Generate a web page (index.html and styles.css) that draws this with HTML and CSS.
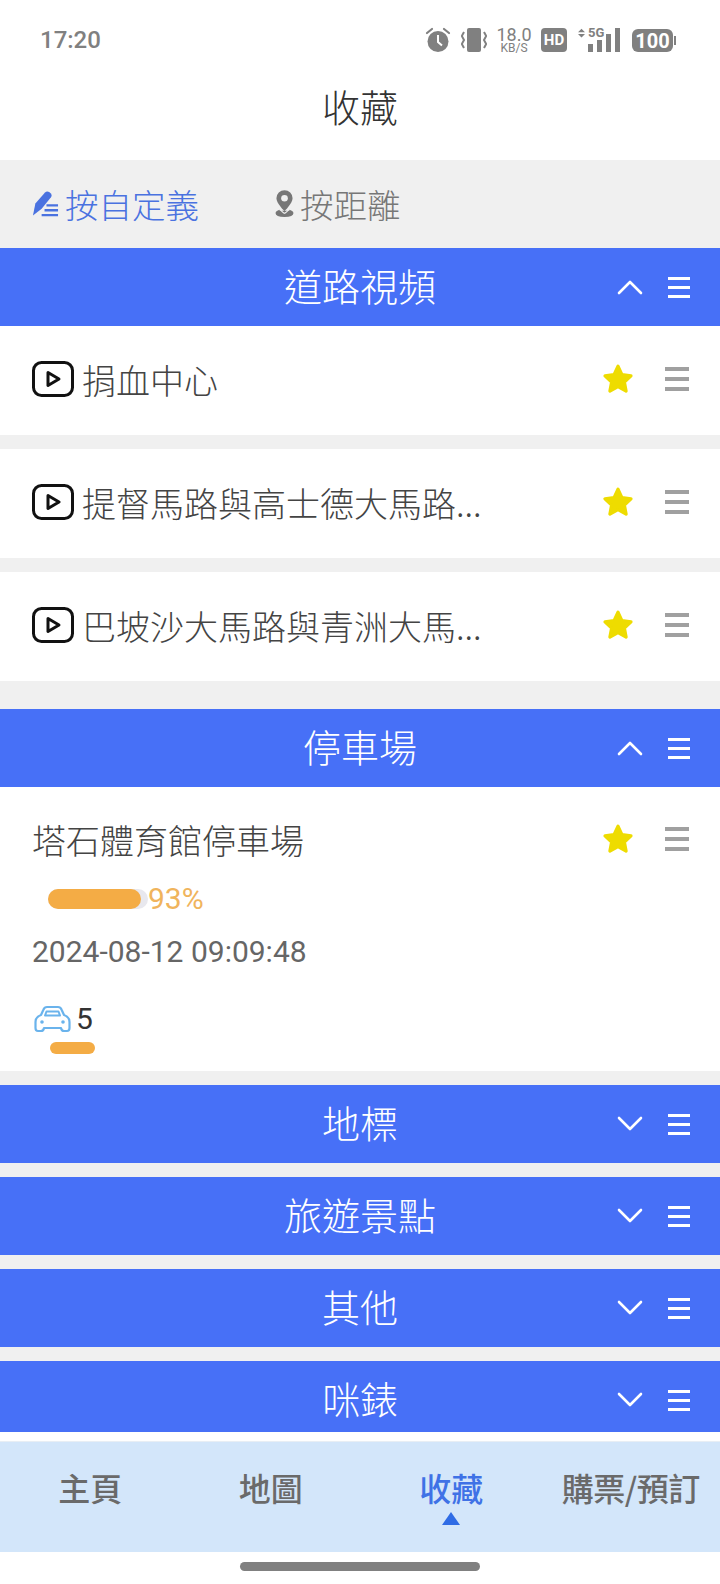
FILE: index.html
```html
<!DOCTYPE html>
<html lang="zh-Hant">
<head>
    <meta charset="UTF-8">
    <meta name="viewport" content="width=device-width, initial-scale=1.0">
    <title>收藏</title>
    <link rel="stylesheet" href="styles.css">
</head>
<body>
<svg class="sprites" width="0" height="0">
    <symbol id="chev-up" viewBox="0 0 26 16"><path d="M2 14 13 3l11 11" fill="none" stroke="#fff" stroke-width="2.6" stroke-linecap="round" stroke-linejoin="round"/></symbol>
    <symbol id="chev-down" viewBox="0 0 26 16"><path d="M2 2l11 11L24 2" fill="none" stroke="#fff" stroke-width="2.6" stroke-linecap="round" stroke-linejoin="round"/></symbol>
    <symbol id="star" viewBox="0 0 30 30"><path d="M15 3l3.700 7.900 8.500 1.100-6.200 5.900 1.600 8.400-7.600-4.200-7.600 4.200 1.600-8.400-6.200-5.900 8.500-1.100z" fill="#eedc00" stroke="#eedc00" stroke-width="3" stroke-linejoin="round"/></symbol>
    <symbol id="play" viewBox="0 0 42 36"><rect x="1.500" y="1.500" width="39" height="33" rx="8" fill="none" stroke="#111" stroke-width="3"/><path d="M16 11.500 27 18l-11 6.500z" fill="none" stroke="#111" stroke-width="3" stroke-linejoin="round"/></symbol>
</svg>

<div class="page">
    <!-- Status bar -->
    <div class="status">
        <span class="clock">17:20</span>
        <div class="status-icons">
            <svg class="ico-alarm" viewBox="0 0 26 26"><circle cx="13" cy="14.500" r="10.500" fill="#808080"/><path d="M13 8v7l4 3.500" fill="none" stroke="#fff" stroke-width="2"/><path d="M2 6l5-4M24 6l-5-4" stroke="#808080" stroke-width="2.200" stroke-linecap="round"/></svg>
            <svg class="ico-vib" viewBox="0 0 26 26"><rect x="6" y="1" width="14" height="24" rx="2" fill="#808080"/><path d="M3 4 .8 8 3 12 .8 16 3 20M23 4l2.200 4L23 12l2.200 4L23 20" transform="translate(0 1)" fill="none" stroke="#808080" stroke-width="2"/></svg>
            <div class="speed"><span class="speed-num">18.0</span><span class="speed-unit">KB/S</span></div>
            <span class="hd">HD</span>
            <div class="signal">
                <div class="net">
                    <svg class="ico-updown" viewBox="0 0 8 10"><path d="M4 0 8 4H0zM4 10 0 6h8z" fill="#808080"/></svg>
                    <span class="net-label">5G</span>
                </div>
                <div class="bars">
                    <i class="bar b1"></i><i class="bar b2"></i><i class="bar b3"></i><i class="bar b4"></i>
                </div>
            </div>
            <div class="battery"><span class="battery-num">100</span><i class="battery-tip"></i></div>
        </div>
    </div>

    <h1 class="title">收藏</h1>

    <div class="tabs">
        <div class="tab tab-active">
            <svg class="tab-ico" viewBox="0 0 28 28"><path d="M1 26.500 3.500 14 13.500 2.500c1.200-1.300 3-1.400 4.300-.4l1.500 1.200c1.300 1.100 1.400 2.900.4 4.200L10 19.500z" fill="#4a72e0"/><path d="M15 16h12M13 21h14M10 26h17" stroke="#4a72e0" stroke-width="2.400"/></svg>
            <span>按自定義</span>
        </div>
        <div class="tab">
            <svg class="tab-ico-pin" viewBox="0 0 20 30"><path d="M10 1a8.500 8.500 0 0 0-8.500 8.500C1.500 15 10 23 10 23s8.500-8 8.500-13.500A8.500 8.500 0 0 0 10 1z" fill="#777"/><circle cx="10" cy="9.500" r="3.500" fill="#f0f0f0"/><path d="M5 22.500c-2.500.7-3.500 1.600-3.500 2.800 0 2 3.800 3 8.500 3s8.500-1 8.500-3c0-1.200-1-2.100-3.500-2.800" fill="#777" stroke="#777" stroke-width="1.800"/><path d="M10 25.500c-1.500-1-3-2.300-4-3.500M10 25.500c1.500-1 3-2.300 4-3.500" fill="none" stroke="#f0f0f0" stroke-width="1.200"/></svg>
            <span>按距離</span>
        </div>
    </div>

    <div class="list">
        <section class="group">
            <div class="group-head">
                <span class="group-name">道路視頻</span>
                <svg class="chev"><use href="#chev-up"/></svg>
                <div class="burger burger-white"><i></i><i></i><i></i></div>
            </div>
            <div class="row">
                <svg class="play"><use href="#play"/></svg>
                <span class="row-name">捐血中心</span>
                <svg class="star"><use href="#star"/></svg>
                <div class="burger"><i></i><i></i><i></i></div>
            </div>
            <div class="row">
                <svg class="play"><use href="#play"/></svg>
                <span class="row-name">提督馬路與高士德大馬路...</span>
                <svg class="star"><use href="#star"/></svg>
                <div class="burger"><i></i><i></i><i></i></div>
            </div>
            <div class="row">
                <svg class="play"><use href="#play"/></svg>
                <span class="row-name">巴坡沙大馬路與青洲大馬...</span>
                <svg class="star"><use href="#star"/></svg>
                <div class="burger"><i></i><i></i><i></i></div>
            </div>
        </section>

        <section class="group group-parking">
            <div class="group-head">
                <span class="group-name">停車場</span>
                <svg class="chev"><use href="#chev-up"/></svg>
                <div class="burger burger-white"><i></i><i></i><i></i></div>
            </div>
            <div class="park">
                <div class="park-top">
                    <span class="row-name">塔石體育館停車場</span>
                    <svg class="star"><use href="#star"/></svg>
                    <div class="burger"><i></i><i></i><i></i></div>
                </div>
                <div class="usage">
                    <div class="meter"><div class="meter-fill" style="width: 93%"></div></div>
                    <span class="usage-pct">93%</span>
                </div>
                <div class="park-time">2024-08-12 09:09:48</div>
                <div class="car">
                    <svg class="car-ico" viewBox="0 0 37 28"><path d="M7 10 9.500 4.500Q10.500 2 13 2H24Q26.500 2 27.500 4.500L30 10Q35.500 12 35.500 17V23Q35.500 26 33 26H30Q27.500 26 27 23H10Q9.500 26 7 26H4Q1.500 26 1.500 23V17Q1.500 12 7 10Z" fill="none" stroke="#6ab3ec" stroke-width="2.200" stroke-linejoin="round"/><path d="M11 10.500 12.500 6.500H24.500L26 10.500Z" fill="none" stroke="#6ab3ec" stroke-width="2" stroke-linejoin="round"/><circle cx="8" cy="17" r="1.800" fill="#6ab3ec"/><circle cx="29" cy="17" r="1.800" fill="#6ab3ec"/></svg>
                    <span class="car-count">5</span>
                </div>
                <div class="car-meter"></div>
            </div>
        </section>

        <section class="group group-closed">
            <div class="group-head">
                <span class="group-name">地標</span>
                <svg class="chev"><use href="#chev-down"/></svg>
                <div class="burger burger-white"><i></i><i></i><i></i></div>
            </div>
        </section>
        <section class="group group-closed">
            <div class="group-head">
                <span class="group-name">旅遊景點</span>
                <svg class="chev"><use href="#chev-down"/></svg>
                <div class="burger burger-white"><i></i><i></i><i></i></div>
            </div>
        </section>
        <section class="group group-closed">
            <div class="group-head">
                <span class="group-name">其他</span>
                <svg class="chev"><use href="#chev-down"/></svg>
                <div class="burger burger-white"><i></i><i></i><i></i></div>
            </div>
        </section>
        <section class="group group-closed">
            <div class="group-head">
                <span class="group-name">咪錶</span>
                <svg class="chev"><use href="#chev-down"/></svg>
                <div class="burger burger-white"><i></i><i></i><i></i></div>
            </div>
        </section>
    </div>

    <!-- Bottom navigation -->
    <nav class="nav">
        <div class="nav-item">主頁</div>
        <div class="nav-item">地圖</div>
        <div class="nav-item nav-active">收藏<i class="nav-caret"></i></div>
        <div class="nav-item nav-item-long">購票/預訂</div>
    </nav>
    <div class="home-bar"><i class="home-handle"></i></div>
</div>
</body>
</html>
```

FILE: styles.css
```css
* {
    box-sizing: border-box;
}

body {
    margin: 0;
    background-color: #fff;
    font-family: "Noto Sans CJK TC", "Noto Sans", sans-serif;
}

.sprites {
    display: block;
    height: 0;
}

.page {
    width: 720px;
    height: 1584px;
    display: flex;
    flex-direction: column;
    overflow: hidden;
}

/* Status bar */
.status {
    height: 80px;
    padding: 24px 44px 0 40px;
    display: flex;
    justify-content: space-between;
    align-items: flex-start;
    flex: none;
}

.clock {
    font: 500 24px/32px Roboto, sans-serif;
    color: #808080;
}

.status-icons {
    display: flex;
    align-items: center;
    height: 32px;
    color: #808080;
}

.ico-alarm {
    width: 26px;
    height: 26px;
}

.ico-vib {
    width: 26px;
    height: 26px;
    margin-left: 10px;
}

.speed {
    margin-left: 9px;
    width: 36px;
    display: flex;
    flex-direction: column;
    align-items: center;
    font-family: Roboto, sans-serif;
}

.speed-num {
    font-size: 18px;
    line-height: 16px;
}

.speed-unit {
    font-size: 12px;
    line-height: 11px;
}

.hd {
    margin-left: 9px;
    width: 26px;
    height: 24px;
    border-radius: 4px;
    background-color: #808080;
    color: #fff;
    font: 700 15px/24px Roboto, sans-serif;
    text-align: center;
}

.signal {
    margin-left: 10px;
    width: 43px;
    height: 24px;
    position: relative;
}

.net {
    display: flex;
    align-items: center;
    gap: 3px;
    height: 10px;
    padding-left: 1px;
}

.ico-updown {
    width: 7px;
    height: 10px;
}

.net-label {
    font: 700 13px/10px Roboto, sans-serif;
}

.bars {
    position: absolute;
    right: 0;
    bottom: 0;
    display: flex;
    align-items: flex-end;
    gap: 4px;
}

.bar {
    width: 5px;
    background-color: #808080;
}

.b1 { height: 8px; }
.b2 { height: 12px; }
.b3 { height: 18px; }
.b4 { height: 24px; }

.battery {
    margin: 0 3px 0 12px;
    width: 41px;
    height: 23px;
    border-radius: 6px;
    background-color: #808080;
    color: #fff;
    position: relative;
    text-align: center;
}

.battery-num {
    font: 700 20px/23px Roboto, sans-serif;
}

.battery-tip {
    position: absolute;
    right: -3px;
    top: 7px;
    width: 2px;
    height: 9px;
    background-color: #808080;
}

/* Title */
.title {
    margin: 0;
    height: 80px;
    flex: none;
    text-align: center;
    font-size: 38px;
    font-weight: 300;
    line-height: 52px;
    color: #333;
}

/* Sort tabs */
.tabs {
    height: 88px;
    flex: none;
    padding: 0 0 2px 32px;
    display: flex;
    align-items: center;
    background-color: #f0f0f0;
}

.tab {
    display: flex;
    align-items: center;
    font-size: 33.500px;
    font-weight: 300;
    color: #777;
    margin-right: 76px;
}

.tab-active {
    color: #4a72e0;
}

.tab-ico {
    width: 27px;
    height: 27px;
    margin-right: 6px;
}

.tab-ico-pin {
    width: 19px;
    height: 29px;
    margin-right: 6px;
}

/* Favourite groups */
.list {
    flex: none;
    height: 1184px;
    overflow: hidden;
    background-color: #f0f0f0;
    margin-bottom: 9px;
}

.group-parking {
    margin-top: 28px;
}

.group-closed {
    margin-top: 14px;
}

.group-head {
    height: 78px;
    position: relative;
    display: flex;
    align-items: center;
    justify-content: center;
    padding-bottom: 6px;
    background-color: #4770f7;
}

.group-name {
    font-size: 38px;
    font-weight: 300;
    color: #fff;
}

.chev {
    position: absolute;
    left: 617px;
    top: 31px;
    width: 26px;
    height: 16px;
}

.burger {
    width: 24px;
    display: flex;
    flex-direction: column;
    gap: 6px;
}

.burger i {
    display: block;
    height: 4px;
    background-color: #a0a0a0;
}

.burger-white {
    position: absolute;
    left: 668px;
    top: 29px;
    width: 22px;
}

.burger-white i {
    height: 3px;
    background-color: #fff;
}

.row {
    height: 109px;
    padding: 0 31px 3px 32px;
    display: flex;
    align-items: center;
    background-color: #fff;
}

.row + .row {
    margin-top: 14px;
}

.play {
    width: 42px;
    height: 36px;
    flex: none;
    margin-right: 8px;
}

.row-name {
    flex: 1;
    font-size: 34px;
    font-weight: 300;
    color: #444;
    white-space: nowrap;
}

.star {
    width: 32px;
    height: 32px;
    margin-right: 31px;
}

/* Parking card */
.park {
    height: 284px;
    padding: 27px 31px 0 32px;
    background-color: #fff;
}

.park-top {
    display: flex;
    align-items: center;
    height: 50px;
}

.usage {
    display: flex;
    align-items: center;
    margin-top: 19px;
    padding-left: 16px;
}

.meter {
    width: 100px;
    height: 20px;
    border-radius: 10px;
    background-color: #e8e8ee;
}

.meter-fill {
    height: 100%;
    border-radius: 10px;
    background-color: #f4ac45;
}

.usage-pct {
    font: 30px/32px Roboto, sans-serif;
    color: #f0b45c;
}

.park-time {
    margin-top: 19px;
    font: 30px/36px Roboto, sans-serif;
    color: #666;
}

.car {
    display: flex;
    align-items: center;
    margin-top: 31px;
    height: 36px;
}

.car-ico {
    width: 37px;
    height: 28px;
    margin: 0 5px 0 2px;
}

.car-count {
    font: 30px/36px Roboto, sans-serif;
    color: #333;
}

.car-meter {
    width: 45px;
    height: 12px;
    margin: 5px 0 0 18px;
    border-radius: 6px;
    background-color: #f4ac45;
}

/* Bottom navigation */
.nav {
    height: 111px;
    flex: none;
    display: grid;
    grid-template-columns: 180.500px 180.500px 180.500px 1fr;
    background-color: #d3e6fa;
    border-top: 1px solid #e8eef4;
}

.nav-item {
    position: relative;
    padding-top: 22px;
    text-align: center;
    font-size: 32px;
    font-weight: 500;
    line-height: 46px;
    color: #6a6a6a;
    white-space: nowrap;
}

.nav-item-long {
    letter-spacing: -0.5px;
}

.nav-active {
    color: #3f72e6;
}

.nav-caret {
    position: absolute;
    left: 50%;
    top: 70px;
    margin-left: -9px;
    border-left: 9px solid transparent;
    border-right: 9px solid transparent;
    border-bottom: 13px solid #2f6ce5;
}

.home-bar {
    flex: 1;
    display: flex;
    justify-content: center;
    padding-top: 10px;
}

.home-handle {
    width: 240px;
    height: 9px;
    border-radius: 5px;
    background-color: #808080;
}
```
